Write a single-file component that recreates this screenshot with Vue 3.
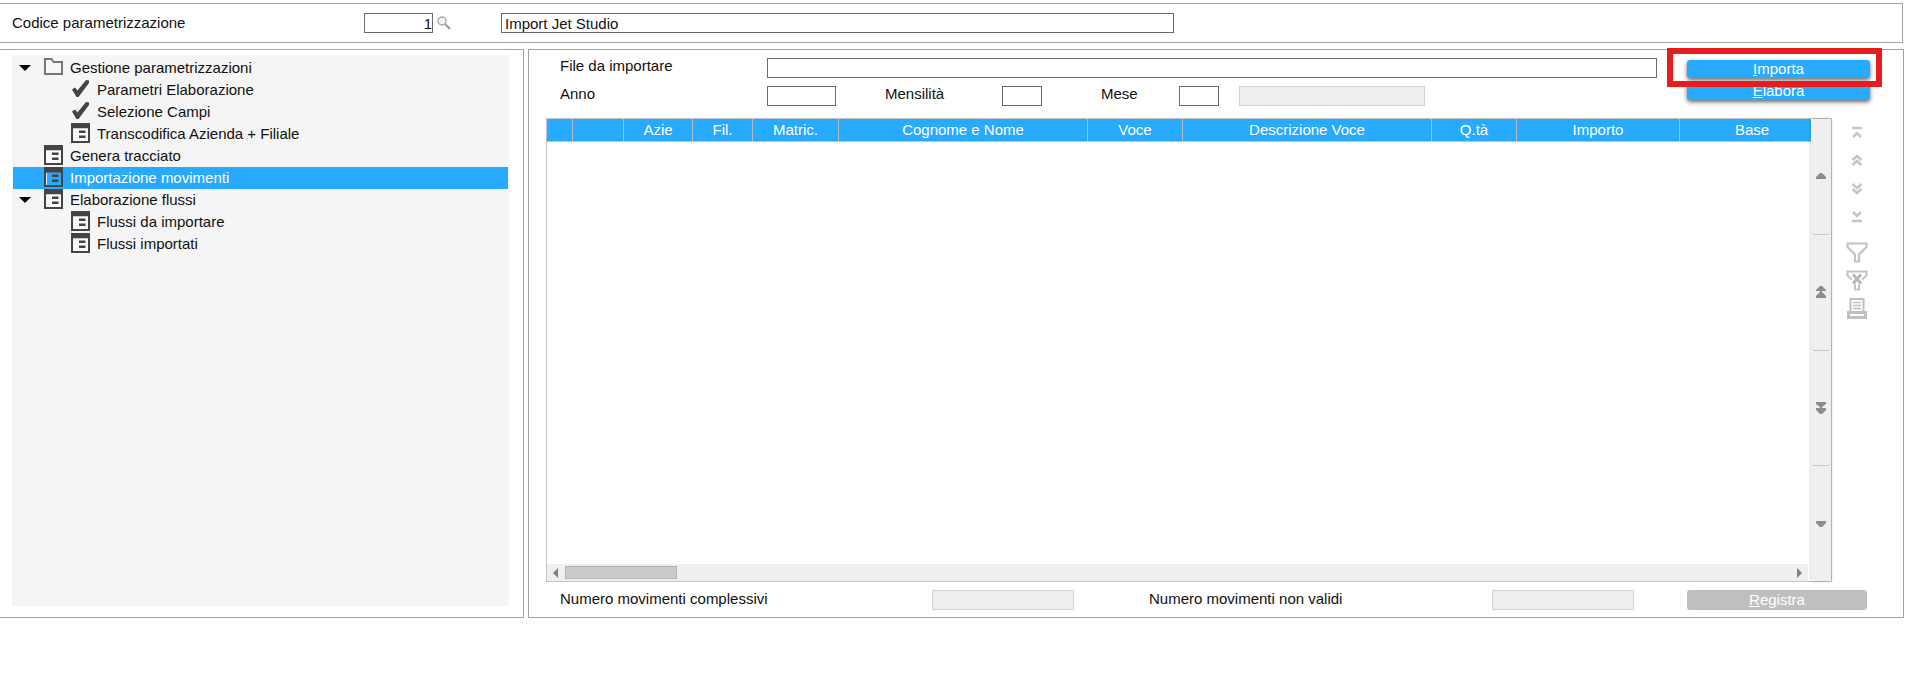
<script setup>
import { ref } from 'vue';

const codice = ref('1');
const descrizione = ref('Import Jet Studio');
const selected = ref('importazione');

// voci dell'albero, già appiattite con il loro livello
const nodes = [
  { id: 'gestione', text: 'Gestione parametrizzazioni', level: 0, icon: 'folder', open: true },
  { id: 'parametri', text: 'Parametri Elaborazione', level: 1, icon: 'check' },
  { id: 'campi', text: 'Selezione Campi', level: 1, icon: 'check' },
  { id: 'transcodifica', text: 'Transcodifica Azienda + Filiale', level: 1, icon: 'form' },
  { id: 'genera', text: 'Genera tracciato', level: 0, icon: 'form' },
  { id: 'importazione', text: 'Importazione movimenti', level: 0, icon: 'form' },
  { id: 'elaborazione', text: 'Elaborazione flussi', level: 0, icon: 'form', open: true },
  { id: 'da-importare', text: 'Flussi da importare', level: 1, icon: 'form' },
  { id: 'importati', text: 'Flussi importati', level: 1, icon: 'form' }
];

// l'ultima colonna prende lo spazio che resta
const columns = [
  { text: '', width: 26 },
  { text: '', width: 51 },
  { text: 'Azie', width: 69 },
  { text: 'Fil.', width: 60 },
  { text: 'Matric.', width: 86 },
  { text: 'Cognome e Nome', width: 249 },
  { text: 'Voce', width: 95 },
  { text: 'Descrizione Voce', width: 249 },
  { text: 'Q.tà', width: 85 },
  { text: 'Importo', width: 163 },
  { text: 'Base' }
];

const scrollButtons = [
  { label: 'Riga precedente', path: 'M4 3 H6 L10 7 V9 H0 V7 Z' },
  { label: 'Pagina precedente', path: 'M4 0 H6 L10 4 V5 H6 V6 L10 10 V12 H0 V10 L4 6 V5 H0 V4 Z' },
  { label: 'Pagina successiva', path: 'M0 0 H10 V2 L6 5 V6 H10 V8 L6 12 H4 L0 8 V6 H4 V5 L0 2 Z' },
  { label: 'Riga successiva', path: 'M0 3 H10 V5 L6 9 H4 L0 5 Z' }
];

const navButtons = [
  { label: 'Primo', path: 'M1 2 H11 M2 11 L6 7 L10 11' },
  { label: 'Indietro', path: 'M1.5 6 L6 2 L10.5 6 M1.5 11 L6 7 L10.5 11' },
  { label: 'Avanti', path: 'M1.5 2 L6 6 L10.5 2 M1.5 7 L6 11 L10.5 7' },
  { label: 'Ultimo', path: 'M2 2 L6 6 L10 2 M1 11 H11' }
];
</script>

<template>
  <div class="page">
    <header class="top-bar">
      <label class="top-label" for="codice">Codice parametrizzazione</label>
      <input id="codice" v-model="codice" class="field code" type="text" />
      <button class="lookup" type="button" aria-label="Cerca">
        <svg width="14" height="14" viewBox="0 0 14 14">
          <circle cx="5" cy="5" r="4" fill="#f4f4f4" stroke="#aaa" stroke-width="1.5" />
          <path d="M8 8 L13 13" stroke="#a0a0a0" stroke-width="2.4" />
        </svg>
      </button>
      <input v-model="descrizione" class="field name" type="text" aria-label="Descrizione" />
    </header>

    <main class="panels">
      <nav class="tree-panel">
        <ul class="tree">
          <li
            v-for="node in nodes"
            :key="node.id"
            class="node"
            :class="{ child: node.level === 1, selected: node.id === selected }"
            @click="selected = node.id"
          >
            <span class="toggle">
              <svg v-if="node.open" width="12" height="6" viewBox="0 0 12 6">
                <path d="M0 0 H12 L6 6 Z" fill="#000" />
              </svg>
            </span>
            <svg v-if="node.icon === 'folder'" class="icon" width="19" height="20" viewBox="0 0 19 20">
              <path d="M1 17 V2 H7.5 L9.5 5 H18 V17 Z" fill="#f8f8f8" stroke="#777" stroke-width="2" />
            </svg>
            <svg v-else-if="node.icon === 'check'" class="icon" width="19" height="20" viewBox="0 0 19 20">
              <path d="M1 10.5 L4 8.5 L6.5 11.5 L15 1 L18 1.5 V4 L7.5 18 H5.5 Z" fill="#444" />
            </svg>
            <svg v-else class="icon" width="19" height="20" viewBox="0 0 19 20">
              <path d="M0 0 H19 V20 H0 Z M2 5.5 V18 H17 V5.5 Z" fill="#444" fill-rule="evenodd" />
              <path v-if="node.id !== selected" d="M2 5.5 H17 V18 H2 Z" fill="#fafafa" />
              <path v-else d="M2.5 6 V18" stroke="#d8eefb" />
              <path d="M8 7.5 H14.5 V10 H8 Z M8 12.5 H14.5 V15 H8 Z" fill="#444" />
            </svg>
            <span class="node-text">{{ node.text }}</span>
          </li>
        </ul>
      </nav>

      <section class="work-panel">
        <div class="form">
          <div class="fields">
            <div class="row">
              <label class="first-label" for="file">File da importare</label>
              <input id="file" class="field grow" type="text" />
            </div>
            <div class="row">
              <label class="first-label" for="anno">Anno</label>
              <input id="anno" class="field anno" type="text" />
              <label class="month-label" for="mensilita">Mensilità</label>
              <input id="mensilita" class="field short" type="text" />
              <label class="mese-label" for="mese">Mese</label>
              <input id="mese" class="field short" type="text" />
              <input class="field mese-name" type="text" aria-label="Nome del mese" disabled />
            </div>
          </div>
          <div class="actions">
            <button class="action" type="button"><u>I</u>mporta</button>
            <button class="action" type="button"><u>E</u>labora</button>
            <span class="highlight"></span>
          </div>
        </div>

        <div class="grid-area">
          <div class="grid">
            <div class="grid-main">
              <div class="grid-view">
                <table class="grid-table">
                  <colgroup>
                    <col
                      v-for="(col, i) in columns"
                      :key="i"
                      :style="col.width ? { width: col.width + 'px' } : null"
                    />
                  </colgroup>
                  <thead>
                    <tr>
                      <th v-for="(col, i) in columns" :key="i">{{ col.text }}</th>
                    </tr>
                  </thead>
                </table>
              </div>
              <div class="h-scroll">
                <svg width="6" height="10" viewBox="0 0 6 10"><path d="M5 0 V10 L0 5 Z" fill="#808080" /></svg>
                <span class="thumb"></span>
                <svg class="h-right" width="6" height="10" viewBox="0 0 6 10"><path d="M1 0 V10 L6 5 Z" fill="#808080" /></svg>
              </div>
            </div>
            <div class="v-scroll">
              <button v-for="btn in scrollButtons" :key="btn.label" type="button" :aria-label="btn.label">
                <svg width="10" height="12" viewBox="0 0 10 12"><path :d="btn.path" fill="#8c8c8c" /></svg>
              </button>
            </div>
          </div>

          <div class="side-tools">
            <button v-for="btn in navButtons" :key="btn.label" type="button" :aria-label="btn.label">
              <svg width="12" height="13" viewBox="0 0 12 13">
                <path :d="btn.path" fill="none" stroke="#c6c6c6" stroke-width="2.6" />
              </svg>
            </button>
            <button class="tool first-tool" type="button" aria-label="Filtra">
              <svg width="22" height="21" viewBox="0 0 22 21">
                <path d="M1.5 1.5 H20.5 V5 L13 12.5 V19.5 H9 V12.5 L1.5 5 Z" fill="none" stroke="#c4c4c4" stroke-width="2.2" />
              </svg>
            </button>
            <button class="tool" type="button" aria-label="Rimuovi filtro">
              <svg width="22" height="21" viewBox="0 0 22 21">
                <path d="M6 9.5 L1.5 5.5 V1.5 H20.5 V5.5 L16 9.5 M9 14 V19.5 H13 V14" fill="none" stroke="#c4c4c4" stroke-width="2" />
                <path d="M7 4.5 L15 13.5 M15 4.5 L7 13.5" stroke="#b8b8b8" stroke-width="3" />
              </svg>
            </button>
            <button class="tool" type="button" aria-label="Stampa">
              <svg width="22" height="21" viewBox="0 0 22 21">
                <path d="M4.5 13 V1 H17.5 V13" fill="none" stroke="#c0c0c0" stroke-width="2" />
                <path d="M7 4.5 H15 M7 7.5 H15 M7 10.5 H15" stroke="#c0c0c0" stroke-width="1.4" />
                <path d="M1 13 H21 V21 H1 Z M4 16 V18 H18 V16 Z" fill="#c0c0c0" fill-rule="evenodd" />
              </svg>
            </button>
          </div>
        </div>

        <footer class="totals">
          <label class="total-label" for="totale">Numero movimenti complessivi</label>
          <input id="totale" class="field total" type="text" disabled />
          <label class="invalid-label" for="non-validi">Numero movimenti non validi</label>
          <input id="non-validi" class="field total" type="text" disabled />
          <button class="register" type="button" disabled><u>R</u>egistra</button>
        </footer>
      </section>
    </main>
  </div>
</template>

<style>
body {
  background: #fff;
}
</style>

<style scoped>
.page {
  padding: 3px 2px 0 0;
  font-family: "Liberation Sans", Arial, sans-serif;
  font-size: 15px;
  line-height: 18px;
  color: #111;
}

.page *,
.page {
  box-sizing: border-box;
}

button {
  margin: 0;
  padding: 0;
  border: 0;
  background: none;
  font: inherit;
  line-height: 18px;
}

svg {
  display: block;
  flex-shrink: 0;
}

.field {
  height: 20px;
  padding: 0 3px;
  border: 1px solid #6c6c6c;
  border-radius: 0;
  background: #fff;
  font: inherit;
  color: #111;
  min-width: 0;
}

.field:disabled {
  border-color: #d2d2d2;
  background: #eee;
}

/* testata */
.top-bar {
  display: flex;
  align-items: center;
  height: 40px;
  margin-right: 1px;
  padding-left: 12px;
  border: 1px solid #a4a4a4;
  border-left: 0;
}

.top-label {
  width: 352px;
}

.code {
  width: 69px;
  padding: 0;
  text-align: right;
}

.lookup {
  width: 68px;
  padding-left: 4px;
}

.name {
  width: 673px;
}

/* pannelli */
.panels {
  display: flex;
  gap: 4px;
  margin-top: 6px;
}

.tree-panel {
  flex: none;
  width: 524px;
  padding: 5px 14px 11px 12px;
  border: 1px solid #a4a4a4;
  border-left: 0;
}

.tree {
  height: 100%;
  margin: 0;
  padding: 2px 1px;
  list-style: none;
  background: #f5f5f5;
}

.node {
  display: flex;
  height: 22px;
  cursor: default;
}

.toggle {
  width: 31px;
  padding: 8px 0 0 6px;
}

.child .toggle {
  width: 58px;
}

.icon {
  margin-right: 7px;
}

.node-text {
  line-height: 22px;
}

.node.selected {
  background: #27aaff;
  color: #fff;
}

.work-panel {
  flex: 1;
  min-width: 0;
  border: 1px solid #a4a4a4;
}

.form {
  display: flex;
  gap: 30px;
  padding: 8px 33px 0 31px;
}

.fields {
  flex: 1;
  display: flex;
  flex-direction: column;
  gap: 8px;
}

.row {
  display: flex;
  align-items: center;
}

.row label {
  flex: none;
  height: 20px;
  line-height: 16px;
}

.grow {
  flex: 1;
}

.first-label {
  width: 207px;
}

.anno {
  width: 69px;
}

.month-label {
  width: 166px;
  padding-left: 49px;
}

.short {
  width: 40px;
}

.mese-label {
  width: 137px;
  padding-left: 59px;
}

.mese-name {
  width: 186px;
  margin-left: 20px;
}

/* pulsanti */
.actions {
  position: relative;
  display: flex;
  flex-direction: column;
  gap: 4px;
  width: 183px;
  padding-top: 2px;
}

.action {
  height: 18px;
  border-radius: 3px;
  background: #27aaff;
  color: #fff;
  box-shadow: 0 2px 4px rgba(0, 0, 0, 0.6);
}

.highlight {
  position: absolute;
  top: -10px;
  left: -20px;
  right: -12px;
  height: 39px;
  border: 6px solid #e81c1c;
  pointer-events: none;
}

/* griglia */
.grid-area {
  display: flex;
  margin-top: 12px;
  padding-left: 17px;
}

.grid {
  flex: 1;
  min-width: 0;
  display: flex;
  border: 1px solid #c4c4c4;
}

.grid-main {
  flex: 1;
  min-width: 0;
}

.grid-view {
  height: 445px;
  overflow: hidden;
}

.grid-table {
  width: calc(100% + 14px);
  table-layout: fixed;
  border-collapse: separate;
  border-spacing: 0;
}

.grid-table th {
  height: 23px;
  padding: 0;
  border-right: 1px solid #b4bcc2;
  border-bottom: 1px solid #c4c4c4;
  background: #27aaff;
  color: #fff;
  font-weight: normal;
}

.h-scroll {
  display: flex;
  align-items: center;
  height: 17px;
  margin-right: 3px;
  padding: 0 6px;
  background: #efefef;
}

.thumb {
  width: 112px;
  height: 13px;
  margin-left: 6px;
  border: 1px solid #b4b4b4;
  background: #cbcbcb;
}

.h-right {
  margin-left: auto;
}

.v-scroll {
  display: flex;
  flex-direction: column;
  width: 20px;
  box-shadow: 0 0 3px rgba(0, 0, 0, 0.25);
}

.v-scroll button {
  flex: 1;
  display: flex;
  align-items: center;
  justify-content: center;
  border-bottom: 1px solid #c8c8c8;
  border-radius: 3px;
  background: #efefef;
}

.v-scroll button:last-child {
  border-bottom: 0;
}

.side-tools {
  display: flex;
  flex-direction: column;
  align-items: center;
  width: 71px;
  padding-right: 22px;
}

.side-tools button {
  display: flex;
  align-items: center;
  justify-content: center;
  width: 28px;
  height: 28px;
}

.side-tools .first-tool {
  margin-top: 8px;
}

/* totali */
.totals {
  display: flex;
  align-items: center;
  padding: 8px 36px 7px 31px;
}

.total-label {
  width: 372px;
  height: 20px;
}

.total {
  width: 142px;
}

.invalid-label {
  width: 418px;
  height: 20px;
  padding-left: 75px;
}

.register {
  width: 180px;
  height: 20px;
  margin-left: auto;
  border-radius: 3px;
  background: #bfbfbf;
  color: #fff;
}
</style>
